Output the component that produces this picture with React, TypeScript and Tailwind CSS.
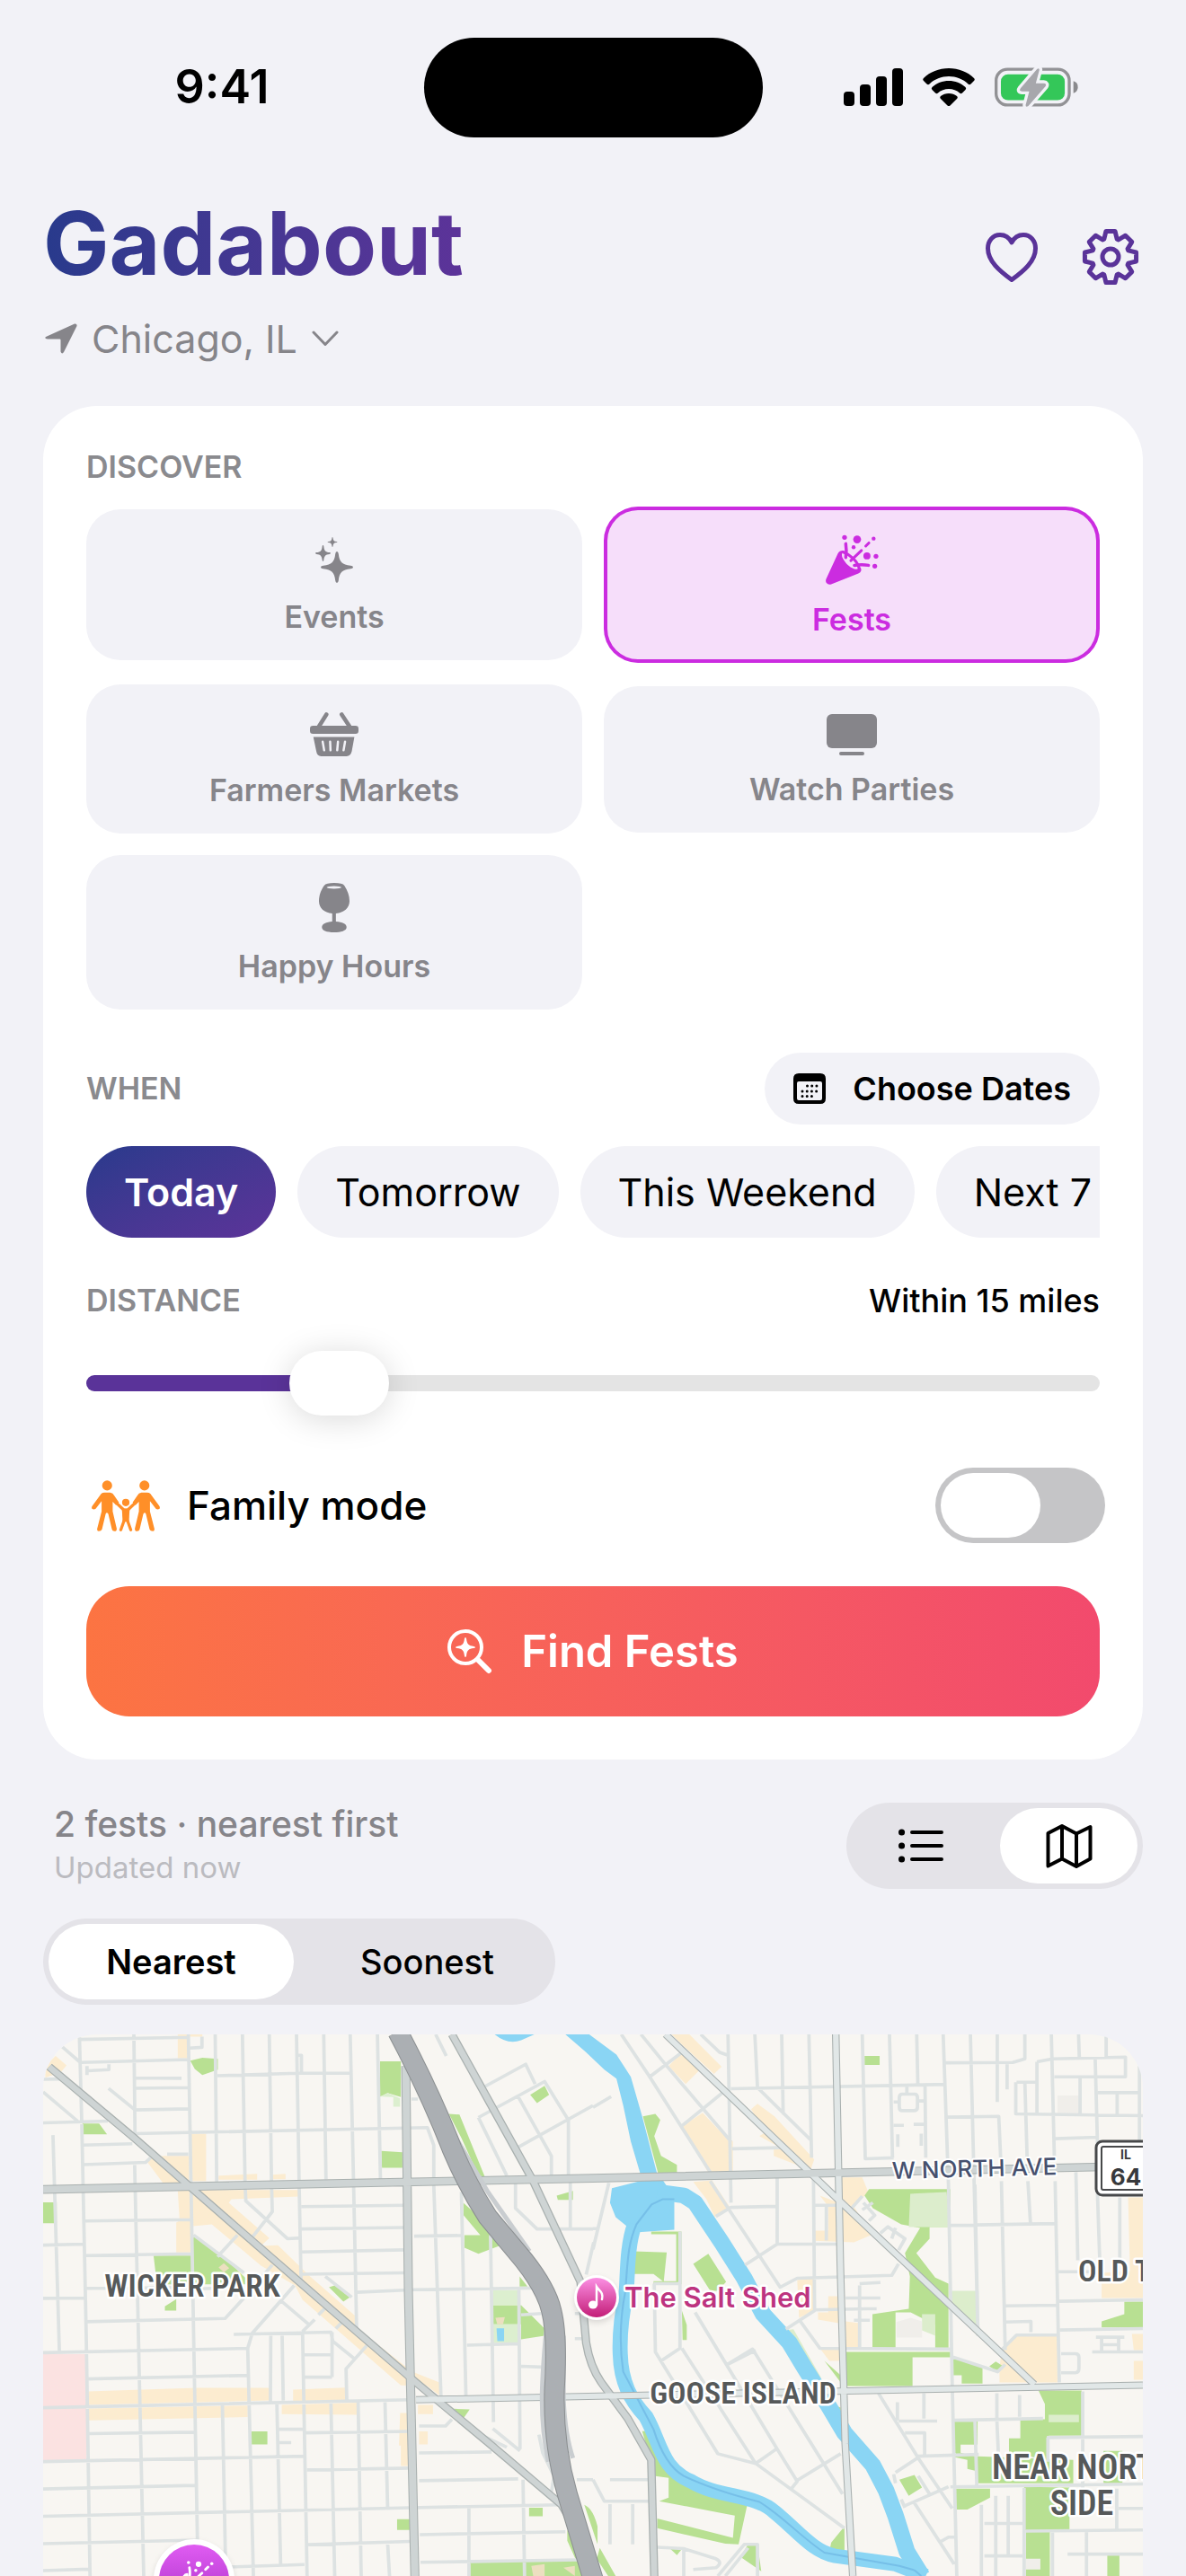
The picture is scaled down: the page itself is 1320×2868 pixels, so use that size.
import { useState } from 'react';

type Icon = (props: { className?: string }) => React.ReactElement;

const STAR =
  'M0-50Q4-50 5-42C8-16 16-8 42-5Q50-4 50 0Q50 4 42 5C16 8 8 16 5 42Q4 50 0 50Q-4 50-5 42C-8 16-16 8-42 5Q-50 4-50 0Q-50-4-42-5C-16-8-8-16-5-42Q-4-50 0-50Z';

// Outline of an eight-toothed gear centred on 0,0
function gearPath(outer: number, inner: number) {
  const points: string[] = [];
  for (let i = 0; i < 8; i++) {
    const steps: [number, number][] = [
      [-20, inner],
      [-10, outer],
      [10, outer],
      [20, inner],
    ];
    for (const [offset, r] of steps) {
      const a = ((i * 45 + offset) * Math.PI) / 180;
      points.push(`${(Math.sin(a) * r).toFixed(2)} ${(-Math.cos(a) * r).toFixed(2)}`);
    }
  }
  return `M${points.join('L')}Z`;
}

const SparklesIcon: Icon = ({ className }) => (
  <svg className={className} viewBox="0 0 42 51" fill="currentColor" aria-hidden="true">
    <path d={STAR} transform="translate(24 33.5) scale(.36 .35)" />
    <path d={STAR} transform="translate(8.5 18) scale(.17 .18)" />
    <path d={STAR} transform="translate(19 5.5) scale(.11 .11)" />
  </svg>
);

const PartyIcon: Icon = ({ className }) => (
  <svg className={className} viewBox="0 0 135 127" fill="none" stroke="currentColor" strokeLinecap="round" aria-hidden="true">
    <path
      fill="currentColor"
      stroke="none"
      d="M1 112L31 47Q36 38 47 40Q39 44 42 56C50 74 66 86 78 87Q84 87 83 80Q92 82 90 91Q89 96 83 98L14 125Q6 127 2 122Q-1 118 1 112Z"
    />
    <path strokeWidth="7" d="M44 43C62 50 82 66 86 88M64 65L91 39M102 28L110 20" />
    <path strokeWidth="8" d="M51 22Q54 40 51 57M73 77Q92 74 109 77" />
    <g fill="currentColor" stroke="none">
      <circle cx="48" cy="6" r="6" />
      <circle cx="80" cy="11" r="10" />
      <circle cx="122" cy="9" r="5" />
      <circle cx="71" cy="31" r="5" />
      <circle cx="105" cy="53" r="9" />
      <circle cx="128" cy="54" r="6" />
      <circle cx="125" cy="79" r="6" />
    </g>
  </svg>
);

const BasketIcon: Icon = ({ className }) => (
  <svg className={className} viewBox="0 0 130 118" fill="currentColor" aria-hidden="true">
    <path d="M44 6L24 38M85 6L106 38" stroke="currentColor" strokeWidth="11" strokeLinecap="round" />
    <rect y="36" width="130" height="22" rx="8" />
    <path d="M9 66H119L112 105Q109 118 98 118H30Q19 118 17 105Z" />
    <path d="M34 79L38 102M54 79L55 102M75 79L73 102M94 79L90 102" stroke="#f2f2f7" strokeWidth="6" strokeLinecap="round" />
  </svg>
);

const TvIcon: Icon = ({ className }) => (
  <svg className={className} viewBox="0 0 56 46" fill="currentColor" aria-hidden="true">
    <rect width="56" height="38" rx="6" />
    <rect x="14" y="42" width="28" height="4" rx="2" />
  </svg>
);

const GlassIcon: Icon = ({ className }) => (
  <svg className={className} viewBox="0 0 83 134" fill="currentColor" aria-hidden="true">
    <path d="M14 7Q20 0 41 0Q64 0 69 7C78 20 83 35 83 49C83 68 68 80 46 83V105C64 106 75 112 75 120C75 130 60 134 41 134C20 134 8 129 8 120C8 112 20 106 36 105V83C14 80 0 68 0 49C0 33 6 18 14 7Z" />
    <ellipse cx="41" cy="12" rx="20" ry="3.5" fill="#f2f2f7" />
  </svg>
);

const CalendarIcon: Icon = ({ className }) => (
  <svg className={className} viewBox="0 0 36 34" aria-hidden="true">
    <path
      fillRule="evenodd"
      d="M6 0H30Q36 0 36 6V28Q36 34 30 34H6Q0 34 0 28V6Q0 0 6 0ZM6 9Q4 9 4 11V28Q4 30 6 30H30Q32 30 32 28V11Q32 9 30 9Z"
    />
    <path d="M15.500 14H29M10 20H29M10 25.500H24" stroke="black" strokeWidth="3" strokeLinecap="round" strokeDasharray="0.010 5.200" />
  </svg>
);

const FamilyIcon: Icon = ({ className }) => {
  const adult = (
    <>
      <ellipse cx="42" cy="14" rx="13.500" ry="13.500" />
      <path d="M26 36Q29 33 35 33H50Q58 34 61 41L74 60Q72 68 66 67L57 58V84L68 131Q68 138 62 138Q56 138 55 133L45 91Q41 85 38 91L28 133Q26 138 19 138Q14 137 15 131L27 84V56L11 77Q6 81 1 77Q-1 73 2 69Z" />
    </>
  );
  return (
    <svg className={className} viewBox="0 0 185 138" fill="currentColor" aria-hidden="true">
      {adult}
      <g transform="translate(185 0) scale(-1 1)">{adult}</g>
      <circle cx="92.500" cy="60" r="10" />
      <path d="M72 66L87 80H98L113 66M89 106L79 134M96 106L106 134" fill="none" stroke="currentColor" strokeWidth="8" strokeLinecap="round" />
      <path d="M82 77H103L101 112H84Z" />
    </svg>
  );
};

const SearchStarIcon: Icon = ({ className }) => (
  <svg className={className} viewBox="0 0 50 50" aria-hidden="true">
    <circle cx="20" cy="20" r="18" fill="none" stroke="currentColor" strokeWidth="4" />
    <path d="M34 34L46 46" stroke="currentColor" strokeWidth="6" strokeLinecap="round" />
    <path d={STAR} fill="currentColor" transform="translate(20 20) scale(.22)" />
  </svg>
);

const ListIcon: Icon = ({ className }) => (
  <svg className={className} viewBox="0 0 50 38" fill="none" stroke="currentColor" strokeLinecap="round" aria-hidden="true">
    <path strokeWidth="4" d="M15 4H48M15 19H48M15 34H48" />
    <path strokeWidth="7" d="M3.500 4H3.600M3.500 19H3.600M3.500 34H3.600" />
  </svg>
);

const MapIcon: Icon = ({ className }) => (
  <svg className={className} viewBox="0 0 52 49" fill="none" stroke="currentColor" strokeWidth="4" strokeLinejoin="round" aria-hidden="true">
    <path d="M2.500 10L18 2L34 10.500L49.500 3V38.500L34 47L18 38.500L2.500 46.500ZM18 2V38.500M34 10.500V47" />
  </svg>
);

const categories: { label: string; icon: Icon; size: string }[] = [
  { label: 'Events', icon: SparklesIcon, size: 'w-[42px] h-[51px]' },
  { label: 'Fests', icon: PartyIcon, size: 'w-[59px] h-[57px]' },
  { label: 'Farmers Markets', icon: BasketIcon, size: 'w-[54px] h-[49px]' },
  { label: 'Watch Parties', icon: TvIcon, size: 'w-[56px] h-[46px]' },
  { label: 'Happy Hours', icon: GlassIcon, size: 'w-[34px] h-[55px]' },
];

const dateRanges = ['Today', 'Tomorrow', 'This Weekend', 'Next 7 Days'];

function StatusBar() {
  return (
    <div className="grid grid-cols-3 items-center h-[194px] shrink-0">
      <div className="text-center text-[52px] font-semibold pl-[54px]">9:41</div>
      <div className="justify-self-center w-[377px] h-[111px] rounded-full bg-black" />
      <div className="flex items-center justify-center gap-[22px] pr-[62px]">
        <svg className="w-[66px] h-[42px]" viewBox="0 0 66 42" aria-hidden="true">
          <rect y="26" width="12" height="16" rx="4" />
          <rect x="18" y="18" width="12" height="24" rx="4" />
          <rect x="36" y="9" width="12" height="33" rx="4" />
          <rect x="54" width="12" height="42" rx="4" />
        </svg>
        <svg className="w-[58px] h-[42px]" viewBox="0 0 58 42" aria-hidden="true">
          <path d="M29 0C40 0 50 4 57 11Q58.500 12.500 57 14L53.500 17.500Q52 19 50.500 17.500C45 12 37 9 29 9C21 9 13 12 7.500 17.500Q6 19 4.500 17.500L1 14Q-.5 12.500 1 11C8 4 18 0 29 0Z" />
          <path d="M29 14C36 14 42.500 16.500 47.500 21Q49 22.500 47.500 24L44 27.500Q42.500 29 41 27.500C38 24.500 33.500 23 29 23C24.500 23 20 24.500 17 27.500Q15.500 29 14 27.500L10.500 24Q9 22.500 10.500 21C15.500 16.500 22 14 29 14Z" />
          <path d="M29 28C32.500 28 35.500 29 38 31Q39.500 32.500 38 34L30.500 41.500Q29 42.500 27.500 41.500L20 34Q18.500 32.500 20 31C22.500 29 25.500 28 29 28Z" />
        </svg>
        <svg className="w-[93px] h-[45px]" viewBox="0 0 280 135" aria-hidden="true">
          <rect x="5" y="6" width="245" height="120" rx="38" fill="none" stroke="#929295" strokeWidth="10" />
          <rect x="21" y="23" width="214" height="87" rx="24" fill="#34c759" />
          <path d="M264 46Q279 50 279 66Q279 82 264 86Z" fill="#8a8a8d" />
          <path
            d="M142 6L87 70Q80 80 92 80H116L104 126Q104 135 113 129L170 64Q176 54 164 53H138L150 8Q149 0 142 6Z"
            fill="#a7a7ac"
            stroke="#f2f2f7"
            strokeWidth="20"
            strokeLinejoin="round"
            paintOrder="stroke"
          />
        </svg>
      </div>
    </div>
  );
}

function Header() {
  return (
    <header className="flex flex-col gap-[22px] px-12 pt-[21px]">
      <div className="flex items-end justify-between">
        <h1 className="text-[98px] leading-[112px] font-bold text-transparent bg-clip-text bg-linear-to-r from-[#283a8c] to-[#5c3399]">
          Gadabout
        </h1>
        <div className="flex items-center gap-12 pb-[9px] pr-1 text-[#5a3399]">
          <button aria-label="Favorites">
            <svg className="w-[60px] h-[64px]" viewBox="0 0 60 64" fill="none" stroke="currentColor" strokeWidth="5" strokeLinejoin="round">
              <path d="M30 16C27 10 22 7.500 17 7.500C9 7.500 3.500 14 3.500 22.500C3.500 37 17 48 30 57.500C43 48 56.500 37 56.500 22.500C56.500 14 51 7.500 43 7.500C38 7.500 33 10 30 16Z" />
            </svg>
          </button>
          <button aria-label="Settings">
            <svg className="w-[64px] h-[64px]" viewBox="-32 -32 64 64" fill="none" stroke="currentColor" strokeWidth="5" strokeLinejoin="round">
              <path d={gearPath(29, 21)} />
              <circle r="9" />
            </svg>
          </button>
        </div>
      </div>
      <button className="flex items-center gap-4 self-start pl-[2px] text-[#86858a]">
        <svg className="w-[36px] h-[34px]" viewBox="0 0 36 34" fill="currentColor" aria-hidden="true">
          <path d="M33 .5Q36 0 35.500 3L21 32Q19 35 17.500 31.500V18.500Q17.500 17.500 16.500 17.500H3Q-1 17 1 15Z" />
        </svg>
        <span className="text-[43px] leading-[56px]">Chicago, IL</span>
        <svg className="w-[30px] h-[18px]" viewBox="0 0 30 18" fill="none" stroke="currentColor" strokeWidth="3" strokeLinecap="round" strokeLinejoin="round" aria-hidden="true">
          <path d="M2 2L15 15.500L28 2" />
        </svg>
      </button>
    </header>
  );
}

function SectionLabel({ children }: { children: React.ReactNode }) {
  return <h2 className="text-[34px] leading-[40px] font-semibold text-[#8a8a8e]">{children}</h2>;
}

function Filters() {
  const [category, setCategory] = useState('Fests');
  const [range, setRange] = useState('Today');
  const [miles, setMiles] = useState(15);
  const [family, setFamily] = useState(false);
  const fill = `${((miles - 5) / 45) * 100}%`;

  return (
    <section className="flex flex-col mx-12 mt-[47px] p-12 bg-white rounded-[60px]">
      <SectionLabel>DISCOVER</SectionLabel>

      <div className="grid grid-cols-2 items-center gap-6 mt-6">
        {categories.map(({ label, icon: CategoryIcon, size }) => (
          <button
            key={label}
            onClick={() => setCategory(label)}
            className={`flex flex-col items-center gap-[18px] pt-[31px] pb-7 rounded-[38px] ${
              category === label
                ? 'bg-[#f6defa] text-[#cb2ce0] inset-ring-4 inset-ring-[#cb2ce0]'
                : 'bg-[#f2f2f7] text-[#86858a]'
            }`}
          >
            <CategoryIcon className={size} />
            <span className="text-[34px] leading-[40px] font-semibold">{label}</span>
          </button>
        ))}
      </div>

      <div className="flex items-center justify-between mt-12">
        <SectionLabel>WHEN</SectionLabel>
        <button className="flex items-center gap-[30px] h-[80px] px-8 rounded-full bg-[#f2f2f7]">
          <CalendarIcon className="w-[36px] h-[34px]" />
          <span className="text-[36px] leading-[44px] font-semibold">Choose Dates</span>
        </button>
      </div>

      <div className="flex gap-6 mt-6 overflow-hidden">
        {dateRanges.map((label) => (
          <button
            key={label}
            onClick={() => setRange(label)}
            className={`shrink-0 h-[102px] px-[42px] rounded-full text-[43px] whitespace-nowrap ${
              range === label
                ? 'bg-linear-to-br from-[#283a8c] to-[#5c3399] text-white font-semibold'
                : 'bg-[#f2f2f7]'
            }`}
          >
            {label}
          </button>
        ))}
      </div>

      <div className="flex items-center justify-between mt-12">
        <SectionLabel>DISTANCE</SectionLabel>
        <span className="text-[36px] leading-[44px] font-medium">Within {miles} miles</span>
      </div>
      <input
        type="range"
        aria-label="Distance in miles"
        min={5}
        max={50}
        value={miles}
        onChange={(e) => setMiles(Number(e.target.value))}
        style={{ '--fill': fill } as React.CSSProperties}
        className="w-full h-[72px] mt-[34px] appearance-none bg-transparent [&::-webkit-slider-runnable-track]:h-[18px] [&::-webkit-slider-runnable-track]:rounded-full [&::-webkit-slider-runnable-track]:bg-[linear-gradient(to_right,#5a3399_var(--fill),#e4e4e4_var(--fill))] [&::-webkit-slider-thumb]:appearance-none [&::-webkit-slider-thumb]:w-[111px] [&::-webkit-slider-thumb]:h-[72px] [&::-webkit-slider-thumb]:-mt-[27px] [&::-webkit-slider-thumb]:rounded-full [&::-webkit-slider-thumb]:bg-white [&::-webkit-slider-thumb]:shadow-[0_4px_36px_rgba(0,0,0,0.15)]"
      />

      <div className="flex items-center mt-[58px] -mr-[6px]">
        <FamilyIcon className="w-[76px] h-[57px] ml-[6px] mr-[30px] text-[#ff8f28]" />
        <label htmlFor="family-mode" className="flex-1 text-[44px] leading-[56px] font-medium">
          Family mode
        </label>
        <input
          id="family-mode"
          type="checkbox"
          role="switch"
          checked={family}
          onChange={(e) => setFamily(e.target.checked)}
          className="appearance-none w-[189px] h-[84px] p-[6px] rounded-full bg-[#c5c5c7] checked:bg-[#34c759] before:block before:w-[111px] before:h-[72px] before:rounded-full before:bg-white checked:before:ml-auto"
        />
      </div>

      <button className="flex items-center justify-center gap-8 h-[145px] mt-12 rounded-[48px] text-white bg-linear-to-r from-[#fc7442] to-[#f24a6d]">
        <SearchStarIcon className="w-[50px] h-[50px]" />
        <span className="text-[49px] leading-[60px] font-semibold">Find {category}</span>
      </button>
    </section>
  );
}

function Results() {
  const [view, setView] = useState('map');
  const [sort, setSort] = useState('Nearest');

  return (
    <section className="flex flex-col px-12 mt-12">
      <div className="flex justify-between">
        <div className="flex flex-col gap-1 pl-3">
          <p className="text-[39px] leading-[48px] font-medium text-[#86858a]">2 fests · nearest first</p>
          <p className="text-[33px] leading-[40px] text-[#bbbbc0]">Updated now</p>
        </div>
        <div className="flex gap-3 h-[96px] p-[6px] rounded-full bg-[#e4e3e8]">
          <button
            aria-label="List view"
            onClick={() => setView('list')}
            className={`flex items-center justify-center w-[153px] rounded-full ${view === 'list' ? 'bg-white' : ''}`}
          >
            <ListIcon className="w-[50px] h-[38px]" />
          </button>
          <button
            aria-label="Map view"
            onClick={() => setView('map')}
            className={`flex items-center justify-center w-[153px] rounded-full ${view === 'map' ? 'bg-white' : ''}`}
          >
            <MapIcon className="w-[52px] h-[49px]" />
          </button>
        </div>
      </div>

      <div className="flex self-start gap-3 h-[96px] mt-[33px] p-[6px] rounded-full bg-[#e4e3e8]">
        {['Nearest', 'Soonest'].map((label) => (
          <button
            key={label}
            onClick={() => setSort(label)}
            className={`w-[273px] rounded-full text-[38px] ${sort === label ? 'bg-white font-semibold' : 'font-medium'}`}
          >
            {label}
          </button>
        ))}
      </div>
    </section>
  );
}

// Map geometry: the west and east sheets share a scale, the east one starts at x = 1568
const west = {
  pink: 'M114 951H230V1100H228V1246H114Z',
  yellow: [
    'M470 62H535V68H500V128H470Z',
    'M147 122L176 148L160 168L120 182V150Z',
    'M505 338H545V470H505Z',
    'M434 400H500V478L430 474L388 415L400 405Z',
    'M578 455L680 450V466H578ZM720 452L755 450V465H720Z',
    'M470 497L520 495H790V513L612 520L605 530L712 628L690 650L735 648L820 735L945 850V880L1090 1000L1162 1030V1066L1130 1040L1060 1038L800 800L780 760L690 705L560 590L510 595L505 668H466V585L475 580Z',
    'M232 1055L520 1045H713V1080L232 1092ZM775 1050L913 1044V1080L775 1084Z',
    'M234 1102L655 1094V1126L234 1135ZM745 1092L950 1086V1120L745 1118Z',
    'M1058 1115H1082V1262H1060V1205H1055ZM1105 1092H1145V1118H1105ZM1108 1166H1131V1202H1108Z',
  ],
  green: [
    'M503 135L535 127L576 130V160L535 175L515 158Z',
    'M1005 137H1060V236L1025 225L1005 235Z',
    'M218 310H262L283 340H218Z',
    'M114 529H150V587H114Z',
    'M406 677H505L512 620L600 690L650 740V757H415Z',
    'M466 798V830H436V818Z',
    'M1008 386L1064 390V433H1010Z',
    'M1187 283L1215 285L1282 458L1265 455L1220 350Z',
    'M1225 530L1290 590L1320 650L1265 672L1228 655V620H1270L1226 565Z',
    'M1402 230L1440 205L1452 230L1420 253Z',
    'M1472 510L1515 497V522H1475Z',
    'M1304 815H1378L1440 880V900L1378 910V868H1304ZM1374 735L1395 763H1374Z',
    'M870 765L885 760L925 793L908 805Z',
    'M665 1166H707V1202H665ZM1050 1410H1084V1440H1050ZM1399 1378H1435V1402H1399Z',
    'M1200 1103L1242 1105L1225 1130Z',
    'M1243 1530L1530 1522L1545 1568H1243ZM1500 1440L1535 1515L1530 1540L1500 1470ZM1545 1370Q1568 1380 1580 1430V1480Z',
  ],
  pale: 'M1304 773H1372V815H1304ZM1304 868H1370V920H1304ZM1007 235L1025 225L1058 240V263H1040V236Z',
  roads: [
    'M210 70L216 300L228 900L238 1568M354 62L357 340M356 425L380 1568M498 62L505 480L512 900L522 1468M569 62L573 475M641 62L648 475L650 525L760 630L795 628M712 62L718 480L720 555L668 625M784 62L791 480L796 745M856 62L862 465M926 62L935 480L943 880M998 62L1006 465',
    'M210 76L498 70M215 140L500 132M355 183L480 184M355 212L500 210M355 272L500 269M575 177L785 170L930 170M114 308L285 303M358 338L1130 321L1147 370V465M220 370L350 366M220 424L385 418L398 405M442 395H498M114 187L160 186M165 97L210 138M114 222L205 303M287 212L355 270M230 150V175M232 163L288 160V145M785 120H797V170M502 100L534 98V68',
    'M140 342L157 945M222 581L505 577M114 648L220 645M225 677L505 672M228 768L500 766M228 861L595 852L645 795M114 796L222 795M114 947L655 935M228 1020L658 1010M114 1100L1085 1078M232 1172L515 1168M114 1250L805 1235M114 1326L515 1316M114 1402L1085 1378L1480 1370M114 1478L520 1468M815 1481L1085 1472M114 1553L235 1549M600 1543L805 1536M735 1160H803M735 1197H770M805 1170L1085 1166M812 1273L1085 1268M805 953H880M805 1015H878',
    'M797 541L1070 537M797 603L1070 599M797 667L1070 661M797 729L1070 725M943 779L1095 772M618 896L875 890L880 915L935 962M512 620L645 725M575 680L628 620M510 770L560 768M720 703L690 740M778 760L667 893L655 935L665 1350L670 1568M740 800L815 867M800 888L832 855M716 900L715 1082M746 900L749 1080M800 890L812 1568M878 890V1015M970 927L915 992L917 1080M860 735L930 793M858 825L842 842M905 862L888 880',
    'M588 1090L597 1568M732 1085L742 1535M875 1085L885 1568M947 1085L955 1568M1018 1085L1025 1378M1025 1478L1030 1568M1147 480L1166 1068M1220 500L1232 1068M1297 620L1305 1140M1372 770L1375 1215M1095 623L1225 621M1095 772L1435 767M1235 926L1370 922M1378 985L1432 987M1378 842L1432 838',
    'M1108 1151H1178L1195 1132M1108 1226L1300 1223M1108 1303L1370 1298M1110 1453L1495 1445M1112 1530L1530 1523M1240 1378V1568M1383 1300L1387 1568M1303 1158L1375 1220M1280 1180L1340 1210M1425 1175L1435 1225L1465 1290L1458 1335M1525 1300H1568',
    'M1280 208L1390 145L1415 200M1265 293L1440 193L1503 300V465M1265 293L1340 455M1370 235L1458 400V455M1368 377L1568 260M1152 62L1180 122M1363 475V545L1420 603H1568M1508 465V600M1088 242H1105M1520 838H1545M1520 908H1545M1570 640L1550 730',
  ],
};

const east = {
  water: [
    'M-260 62Q-225 92-190 78L-155 62Z',
    'M-73 62H-10L62 118L100 180L130 290L172 460H128L100 360L80 260L62 185L30 160L-20 110Z',
    'M50 490L125 470L185 468L215 515V605L120 612L95 600L60 570L45 530Z',
  ],
  river: [
    'M110 590C90 650 92 720 88 780C74 850 70 900 72 950C74 1030 100 1080 140 1125C180 1200 180 1270 260 1305C330 1350 430 1340 480 1390C540 1440 580 1500 640 1512L800 1535L880 1568',
    'M170 500L240 510L270 530L340 640L400 740L450 840L520 920L560 990L620 1090L665 1170L740 1260L775 1330L800 1400L830 1500L870 1568',
  ],
  yellow: [
    'M208 62H255L340 152L320 172L240 95ZM235 112L283 160L245 200L200 150Z',
    'M235 318L290 280L330 325L370 360V445L305 447ZM265 472L315 468L362 543L322 570L300 520Z',
    'M435 255L480 290L585 410L575 440L478 400V378L500 380L440 345L455 335L418 270Z',
    'M655 460H712L728 500L690 540L735 620L690 640L585 636V608H622V540L600 510L650 530Z',
    'M540 745L585 740V830L545 850ZM622 790H650V865L595 855V835H622ZM668 860L705 865V935H670ZM600 935H652V970H625Z',
    'M1120 900H1228V1030H1075V990L1080 945ZM1415 515H1454V795H1345V725L1420 720ZM1425 895H1454V940H1430ZM1430 970H1454V1022H1430Z',
  ],
  green: [
    'M132 290L165 283L178 300L162 345L180 400L222 425V447H172Z',
    'M718 122H758V147H718Z',
    'M730 492H945V598H890V630L855 670L905 738L940 755V935H905V870L840 835H800V935H739V840L835 825L838 735L825 670L865 600L815 590L740 545L718 510Z',
    'M668 945H945V960H845V1040H668ZM950 958L1030 990V1033H975V1010H950ZM1048 985L1065 972L1085 985L1070 1000Z',
    'M108 665L195 668L187 750L160 728H108ZM154 610H234V757H160V748H220V618H154ZM265 700L305 672L352 750L330 775H310ZM235 830L248 870V912H237Z',
    'M1178 1052H1292L1298 1178H1205V1250L1140 1230H1100V1185H1130V1132H1195V1090Z',
    'M955 1138H1017V1203H972V1225L1010 1235V1275L990 1270V1245L957 1238ZM1017 1235L1270 1245V1310H1017ZM960 1325H1050V1350L990 1383H960ZM1140 1320L1260 1322V1438L1208 1445V1568H1145V1440H1140ZM1350 1220H1400V1310H1350Z',
    'M130 1165H160L175 1240L240 1305L310 1345L410 1360L385 1480L350 1478L170 1435V1408L370 1462L375 1400L175 1360L200 1350V1295L165 1290Z',
    'M810 1300L850 1287L870 1322L835 1345ZM630 1475L665 1430V1505L625 1500ZM390 1515L410 1480H435L445 1555ZM612 970L655 1010V1030ZM615 1085L655 1100V1145ZM205 1493H235L222 1510ZM18 1490L60 1568H40L10 1520ZM1345 860L1405 840V805H1454V877H1345ZM1360 1510H1392V1568H1360Z',
  ],
  pale: 'M839 505L935 500L945 598H835ZM948 775H1020V885L948 820ZM870 840H905V900L870 885ZM1205 1120H1285V1140H1205ZM505 885L530 882L605 1020L595 1010Z',
  white: 'M802 862L840 850L870 860V905H803ZM1145 1520H1183V1550H1145Z',
  roads: [
    'M357 62L365 530M428 62L435 210M499 62L503 285M571 62L578 405M712 62L720 408L795 405M784 62L792 405M856 62L859 200M926 62L940 480L950 1040L962 1568M998 62L1018 900M1069 62V250M1142 62V130L1110 140L932 141M1212 62L1220 405M1284 62L1286 127M1357 62V125M1095 140V215',
    'M365 213L930 201M935 292L1073 290L1078 405M1174 138L1215 130L1408 125V180H1220M1174 138V282M1120 195H1172M1118 195V283L1454 288M1142 195L1148 405M1288 180V285M1328 130L1335 405M1335 224H1445M1386 228V285M1445 150V360M1222 352L1332 348M75 62L150 180L310 445M127 62L195 150L365 360M150 180L235 112M233 318L345 222M285 62L335 112L357 120M368 380L495 377M435 210L575 355M0 265L48 235',
    'M830 208V228M795 250H808M860 247H878M878 205L880 405M795 315H822M848 312H878M806 340V375M868 338V372M818 228H850Q858 228 858 238V264Q858 274 848 274H818Q810 274 810 264V238Q810 228 818 228Z',
    'M310 470L495 765L540 740L790 732L808 700M325 568L365 543L485 540M487 460V645L402 703M487 645H650M583 460L586 830L510 882M586 537H650M617 540V635M583 828L725 825M545 855L600 935L945 937M668 795H760M705 760V935M705 755L760 752M690 857H732M725 825H750M1010 480L1018 900M1080 470L1090 940M1150 470L1157 590M1222 470L1233 1030M945 593L1220 588M1277 445L1282 690M1332 445L1340 690M1393 515V690M1088 817L1225 815M1088 862L1158 860V890M1080 940L1120 898H1230M1230 722H1345M1230 804L1454 800M1235 884L1454 880M1330 904H1405M1345 904V945M1390 904V945M1320 945H1454M1345 925H1390M1238 950H1275Q1285 950 1285 960V990Q1285 1003 1275 1003H1238M948 958L1070 1000L1090 980',
    'M712 512L680 550M712 550L740 530M715 530L745 565L730 580M760 615L780 597L825 630L808 662M790 630L800 600M230 610V935L180 970M160 755H230M162 755L165 945L330 1228L430 1255L665 1435M235 935L430 1255L485 1215M270 835L487 1215L540 1305L525 1325M355 980L422 937L660 1340M430 940L355 980M540 1302L655 1228',
    'M755 1060L860 1240L950 1380M805 1085V1135M808 1137H910M875 1060V1130M825 1170H877V1235M955 1135L1190 1130M1068 1060V1130M1010 1135L1015 1320M1128 1065V1125M860 1235L1020 1230M1295 1055V1330M1200 1183L1454 1180M1203 1183V1250M945 1320L1454 1312M1068 1135L1075 1300M800 1280L858 1240M795 1285L800 1310M820 1375L940 1320M850 1365L955 1535M915 1475L940 1460H960M890 1340L860 1290M815 1355L825 1378M1027 1370V1568M1065 1345V1568M1098 1345V1510M1140 1320V1568M1035 1422H1140M1035 1512H1140M1145 1443L1454 1440M1255 1507H1454M1215 1443V1568M1305 1443V1568M1385 1325V1440M1390 1380H1454',
    'M0 1300L30 1360H155M45 1300H155M45 1368V1480M105 1368V1480M170 1488L240 1492L325 1520Q345 1530 325 1545L265 1550M240 1495V1568M330 1568L400 1480H435V1568M350 1568L410 1490M42 475L0 660M0 602H10',
  ],
};

function CityMap() {
  return (
    <svg className="block w-full min-h-[603px]" viewBox="0 0 1224 603" preserveAspectRatio="xMidYMin slice" role="img" aria-label="Map of Chicago">
      <defs>
        <linearGradient id="venuePin" x1="0" y1="0" x2="0" y2="1">
          <stop offset="0" stopColor="#fb8fe3" />
          <stop offset="1" stopColor="#c31e78" />
        </linearGradient>
        <linearGradient id="festPin" x1="0" y1="0" x2="0" y2="1">
          <stop offset="0" stopColor="#e05cf2" />
          <stop offset="1" stopColor="#a52fc4" />
        </linearGradient>
      </defs>
      <rect width="1224" height="603" fill="#f8f6f2" />
      <g transform="scale(.4209 .4004) translate(-114 -62)" fill="none" strokeLinejoin="round">
        <path d={west.pink} fill="#fbe2e1" />
        <path d={west.yellow.join('')} fill="#fcecd0" />
        <path d={west.green.join('')} fill="#b8e092" />
        <path d={west.pale} fill="#dcefcf" />
        <path d="M1313 879H1333V915H1315Z" fill="#8ad5f4" />
        <path d="M1310 850L1335 848L1330 868H1315ZM1405 1540L1440 1535V1568H1410ZM1490 1545L1520 1540V1568ZM578 710L592 698L606 712L592 724Z" fill="#ecdfc0" />
        <g transform="translate(1568 0)">
          <path d={east.yellow.join('')} fill="#fcecd0" />
          <path d={east.green.join('')} fill="#b8e092" />
          <path d={east.pale} fill="#dcedcc" />
          <path d={east.white} fill="#f0eeea" />
          <path d="M1228 232H1285V285H1228Z" fill="#f0eeea" />
          <path d={east.water.join('')} fill="#8ad5f4" />
          <path d={east.river[0]} stroke="#8ad5f4" strokeWidth="40" />
          <path d={east.river[1]} stroke="#8ad5f4" strokeWidth="44" />
          <path
            d="M215 520H185L155 535L115 590C90 650 92 700 85 780C72 850 70 930 80 1000L160 1160Q190 1260 240 1290Q320 1330 440 1362C500 1400 550 1460 612 1503L810 1540L850 1552L868 1568"
            stroke="#76bfe8"
            strokeWidth="5"
          />
          <path d={east.roads.join('')} stroke="#dde2e2" strokeWidth="9" />
        </g>
        <path d={west.roads.join('')} stroke="#dde2e2" strokeWidth="9" />

        <g stroke="#a9b0af">
          <path strokeWidth="22" d="M130 152L355 350L640 612L945 890L1100 1030L1300 1205L1485 1370L1530 1450M1195 62L1410 470L1535 750L1550 920Q1560 985 1590 1030L1660 1130L1722 1245L1730 1568" />
          <path strokeWidth="20" d="M1760 62L2215 520L2735 1035M2210 62L2222 700L2235 1200L2255 1568M1100 1078L3022 1037" />
          <path strokeWidth="24" d="M1073 150L1080 780L1097 1568M114 493L1568 462L3022 428" />
        </g>
        <g stroke="#ced4d4">
          <path strokeWidth="16" d="M130 152L355 350L640 612L945 890L1100 1030L1300 1205L1485 1370L1530 1450M1195 62L1410 470L1535 750L1550 920Q1560 985 1590 1030L1660 1130L1722 1245L1730 1568" />
          <path strokeWidth="15" stroke="#e1e7e7" d="M1760 62L2215 520L2735 1035M2210 62L2222 700L2235 1200L2255 1568M1100 1078L3022 1037" />
          <path strokeWidth="19" d="M1073 150L1080 780L1097 1568M114 493L1568 462L3022 428" />
        </g>
        <path d="M1200 340L1290 500L1400 665M1455 800Q1440 900 1434 1040Q1430 1150 1450 1250M1490 900V1080Q1495 1180 1515 1240" stroke="#c9cdd0" strokeWidth="12" />
        <path d="M1052 55Q1140 230 1195 380Q1235 480 1290 570L1385 690Q1445 770 1458 830Q1475 900 1466 1050Q1462 1200 1500 1340L1575 1600" stroke="#8c9092" strokeWidth="55" />
        <path d="M1052 55Q1140 230 1195 380Q1235 480 1290 570L1385 690Q1445 770 1458 830Q1475 900 1466 1050Q1462 1200 1500 1340L1575 1600" stroke="#abafb3" strokeWidth="50" />
      </g>

      <g className="font-['Roboto_Condensed',Roboto,sans-serif]" fontWeight="600" fill="#56595a" stroke="#ffffff" strokeWidth="5" strokeLinejoin="round" paintOrder="stroke">
        <text x="166" y="292" fontSize="35" textAnchor="middle">WICKER PARK</text>
        <text x="779" y="411" fontSize="34" textAnchor="middle">GOOSE ISLAND</text>
        <text x="1152" y="275" fontSize="34">OLD TOWN</text>
        <text x="1056" y="495" fontSize="38">NEAR NORTH</text>
        <text x="1156" y="535" fontSize="38" textAnchor="middle">SIDE</text>
      </g>
      <text
        x="945"
        y="161"
        fontSize="26"
        fontWeight="500"
        fill="#46506e"
        stroke="#ffffff"
        strokeWidth="4"
        strokeLinejoin="round"
        paintOrder="stroke"
        transform="rotate(-1.5 945 161)"
      >
        W NORTH AVE
      </text>

      <g fill="#ffffff" stroke="#47484a">
        <rect x="1172" y="119" width="72" height="60" rx="7" strokeWidth="3" />
        <rect x="1178" y="125" width="66" height="48" rx="2" strokeWidth="2" />
        <g stroke="none" fill="#38393b" fontWeight="700" textAnchor="middle">
          <text x="1205" y="139" fontSize="14">IL</text>
          <text x="1205" y="168" fontSize="26">64</text>
        </g>
      </g>

      <g>
        <circle cx="616" cy="293" r="25" fill="#ffffff" className="drop-shadow-md" />
        <circle cx="616" cy="293" r="22" fill="url(#venuePin)" />
        <ellipse cx="612" cy="301" rx="5" ry="4.500" fill="#ffffff" />
        <path d="M616 301V281C619 286 624 287 622 295" fill="none" stroke="#ffffff" strokeWidth="2.500" strokeLinecap="round" />
        <text x="647" y="304" fontSize="31" fontWeight="600" fill="#bd3480" stroke="#ffffff" strokeWidth="5" strokeLinejoin="round" paintOrder="stroke">
          The Salt Shed
        </text>
      </g>

      <g>
        <circle cx="168" cy="607" r="45" fill="#ffffff" className="drop-shadow-md" />
        <circle cx="168" cy="607" r="39" fill="url(#festPin)" />
        <g transform="translate(145 586) scale(.35)" fill="#ffffff" stroke="#ffffff" strokeLinecap="round">
          <path stroke="none" d="M1 112L31 47Q36 38 47 40C50 74 66 86 83 80Q92 82 90 91L14 125Q-1 118 1 112Z" />
          <path fill="none" strokeWidth="8" d="M51 22Q54 40 51 57M64 65L91 39M102 28L110 20" />
          <circle cx="48" cy="6" r="5" stroke="none" />
          <circle cx="80" cy="11" r="9" stroke="none" />
          <circle cx="122" cy="9" r="5" stroke="none" />
          <circle cx="71" cy="31" r="5" stroke="none" />
        </g>
      </g>
    </svg>
  );
}

export default function App() {
  return (
    <div className="flex flex-col min-h-screen overflow-hidden bg-[#f2f2f7] text-black font-[Inter,sans-serif]">
      <StatusBar />
      <Header />
      <main className="flex flex-col">
        <Filters />
        <Results />
        <div className="mx-12 mt-[33px] rounded-t-[60px] overflow-hidden">
          <CityMap />
        </div>
      </main>
    </div>
  );
}
